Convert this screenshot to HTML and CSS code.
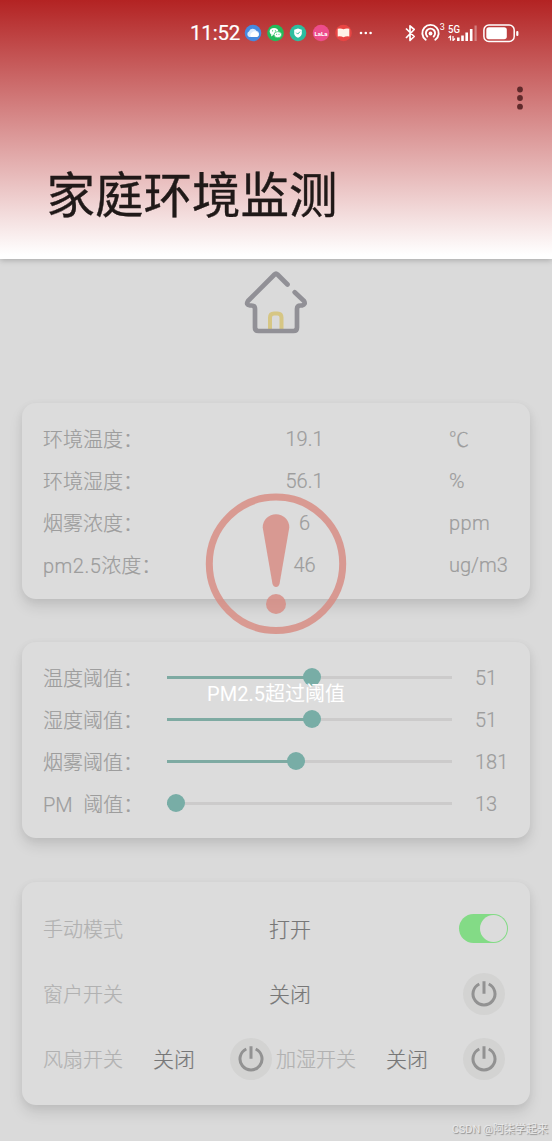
FILE: index.html
```html
<!DOCTYPE html>
<html lang="zh-CN">
<head>
<meta charset="utf-8">
<title>家庭环境监测</title>
<link rel="stylesheet" href="styles.css">
</head>
<body>
<svg class="defs" width="0" height="0" aria-hidden="true">
  <symbol id="power" viewBox="0 0 42 42">
    <circle cx="21" cy="21" r="21" fill="#d3d3d2"/>
    <path d="M16.300 11A11 11 0 1 0 25.700 11M21 8.200V20.700" fill="none" stroke="#929292" stroke-width="3"/>
  </symbol>
</svg>
<header class="header">
  <div class="status">
    <span class="clock">11:52</span>
    <svg class="apps" width="124" height="18" viewBox="0 0 124 18">
      <circle cx="9" cy="9" r="8.300" fill="#4689df"/>
      <path d="M5.200 13a3 3 0 0 1-.2-5.500 4 4 0 0 1 7.300-.8 3.200 3.200 0 0 1 .3 6.300z" fill="#d9eafd"/>
      <path d="M7 13a3 3 0 0 1 1-4.500 4 4 0 0 1 5.500 0 2.500 2.500 0 0 1-.5 4.500z" fill="#fff"/>
      <circle cx="31.500" cy="9" r="8.300" fill="#23bb5b"/>
      <ellipse cx="30" cy="7.600" rx="4.300" ry="3.500" fill="#fff"/><path d="M27.500 10l-.5 2.500 2.500-1.500z" fill="#fff"/>
      <ellipse cx="33.800" cy="10.700" rx="3.800" ry="3.100" fill="#fff" stroke="#23bb5b" stroke-width=".7"/>
      <g fill="#23bb5b"><circle cx="28.600" cy="6.800" r=".6"/><circle cx="31.400" cy="6.800" r=".6"/><circle cx="32.600" cy="10.200" r=".5"/><circle cx="35" cy="10.200" r=".5"/></g>
      <circle cx="54" cy="9" r="8.300" fill="#2dbd9f"/>
      <path d="M54 4.500l3.800 1.300v3.500c0 2-1.500 3.500-3.800 4.500-2.300-1-3.800-2.500-3.800-4.500V5.800z" fill="#fff"/>
      <path d="M52.300 8.700l1.400 1.400 2.300-2.500" fill="none" stroke="#2dbd9f"/>
      <circle cx="77" cy="9" r="8.300" fill="#ed4c8b"/>
      <text x="77" y="11.600" class="lala">LaLa</text>
      <circle cx="99.500" cy="9" r="8.300" fill="#e84543"/>
      <path d="M93.700 4.700q3.300-.8 5.800.6 2.500-1.400 5.800-.6v7.800q-3.300-.5-5.800.8-2.500-1.300-5.800-.8z" fill="#fff3e8"/>
      <g fill="#fff"><circle cx="117" cy="9" r="1.300"/><circle cx="121.800" cy="9" r="1.300"/></g>
    </svg>
    <svg class="more" width="6" height="18" viewBox="0 0 6 18"><circle cx="2.600" cy="9" r="1.300" fill="#fff"/></svg>
    <svg class="signals" width="118" height="24" viewBox="0 0 118 24">
      <path d="M3 7.500l8.200 8-4.200 4V4.800l4.200 3.700L3 17" fill="none" stroke="#fff" stroke-width="1.700" stroke-linejoin="round"/>
      <g fill="none" stroke="#fff" stroke-width="1.900" stroke-linecap="round">
        <path d="M22.700 18.700a8.200 8.200 0 1 1 9.600 0"/><path d="M24.300 15.500a4.600 4.600 0 1 1 6.400 0"/>
      </g>
      <circle cx="27.500" cy="12.500" r="1.900" fill="#fff"/>
      <text x="36.800" y="9" class="tiny">3</text>
      <text x="45" y="12" class="net" textLength="12" lengthAdjust="spacingAndGlyphs">5G</text>
      <path d="M47.500 14.500v5M45.500 16.800l2-2M50 15v5M52 17.500l-2 2" fill="none" stroke="#fff" stroke-width="1.200"/>
      <g fill="#fff"><rect x="54" y="16.500" width="2.600" height="3.500"/><rect x="58.200" y="14.500" width="2.600" height="5.500"/><rect x="62.400" y="11.500" width="2.600" height="8.500"/><rect x="66.900" y="8" width="2.600" height="12"/><rect x="71.500" y="4.500" width="2.200" height="15.500" opacity=".35"/></g>
      <rect x="80.900" y="4" width="30.300" height="16.500" rx="5" fill="none" stroke="#fff" stroke-width="1.500"/>
      <rect x="83.300" y="6.300" width="20.500" height="12" rx="2.700" fill="#fff"/>
      <rect x="113.200" y="10" width="2.200" height="5" rx="1" fill="#fff"/>
    </svg>
  </div>
  <svg class="menu" width="8" height="26" viewBox="0 0 8 26"><g fill="#602a2b"><circle cx="4" cy="4.500" r="2.900"/><circle cx="4" cy="13" r="2.900"/><circle cx="4" cy="21.700" r="2.900"/></g></svg>
  <h1 class="title">家庭环境监测</h1>
</header>
<main class="content">
  <svg class="house" width="64" height="64" viewBox="0 0 64 64">
    <path d="M26 60V46.500q0-4 4-4h3.500q4 0 4 4V60" fill="none" stroke="#d6c684" stroke-width="4"/>
    <path d="M43.500 13.500L33.500 3.500q-1.500-1.500-3 0L4 30q-2.500 3.800 2 4.500h1.500q3.500 0 3.500 3.500v18.500q0 3.500 3.500 3.500h35q3.500 0 3.500-3.500V38q0-3.500 3.500-3.500H58q4-1 2-4.500L50.700 21.300" fill="none" stroke="#919096" stroke-width="4.700" stroke-linecap="round" stroke-linejoin="round"/>
  </svg>
  <section class="card readings">
    <div class="reading"><span class="label">环境温度：</span><span class="value">19.1</span><span class="cjk">℃</span></div>
    <div class="reading"><span class="label">环境湿度：</span><span class="value">56.1</span><span class="percent">%</span></div>
    <div class="reading"><span class="label">烟雾浓度：</span><span class="value">6</span><span class="ppm">ppm</span></div>
    <div class="reading"><span class="label"><span class="spaced">pm2.5</span>浓度：</span><span class="value">46</span><span>ug/m3</span></div>
  </section>
  <section class="card limits">
    <div class="limit"><span class="label">温度阈值：</span><div class="slider"><div class="fill" style="width:145px"></div><div class="thumb"></div></div><span>51</span></div>
    <div class="limit"><span class="label">湿度阈值：</span><div class="slider"><div class="fill" style="width:145px"></div><div class="thumb"></div></div><span>51</span></div>
    <div class="limit"><span class="label">烟雾阈值：</span><div class="slider"><div class="fill" style="width:128.500px"></div><div class="thumb"></div></div><span>181</span></div>
    <div class="limit"><span class="label pm">PM  阈值：</span><div class="slider"><div class="fill" style="width:9px"></div><div class="thumb"></div></div><span>13</span></div>
  </section>
  <section class="card controls">
    <div class="control"><span class="name">手动模式</span><span class="state">打开</span><div class="toggle"><div class="knob"></div></div></div>
    <div class="control"><span class="name">窗户开关</span><span class="state">关闭</span><svg class="power"><use href="#power"/></svg></div>
    <div class="control pair"><span class="name">风扇开关</span><span class="state">关闭</span><svg class="power"><use href="#power"/></svg><span class="name">加湿开关</span><span class="state">关闭</span><svg class="power"><use href="#power"/></svg></div>
  </section>
</main>
<div class="alert">
  <svg width="142" height="142" viewBox="0 0 142 142">
    <g fill="#d88980" opacity=".8"><circle cx="71" cy="70.800" r="66.700" fill="none" stroke="#d88980" stroke-width="7"/>
    <path d="M57.700 34.500a13.300 13.300 0 0 1 26.600 0L74.500 91q-1 3-3.500 3t-3.500-3z"/>
    <circle cx="71" cy="111" r="10"/></g>
  </svg>
  <p class="message">PM2.5超过阈值</p>
</div>
<div class="credit">CSDN @阿柒学起来</div>
</body>
</html>
```
FILE: styles.css
```css
* { box-sizing: border-box; }
body {
  margin: 0;
  position: relative;
  width: 552px;
  height: 1141px;
  overflow: hidden;
  background: #dadada;
  font-family: Roboto, "Noto Sans CJK SC", sans-serif;
  font-size: 20px;
  font-weight: 300;
  color: #9d9d9d;
  -webkit-text-stroke: .2px currentColor;
}
.defs { position: absolute; }
.header {
  display: flex;
  flex-direction: column;
  height: 259px;
  background: linear-gradient(#b32323, #fff 255px);
  box-shadow: 0 1px 6px rgba(0, 0, 0, .25);
}
.status { display: flex; align-items: center; height: 65px; padding-left: 190px; }
.clock { width: 54px; font-size: 20.500px; font-weight: 400; color: #fff; letter-spacing: -.2px; }
.apps { flex: none; }
.more { flex: none; }
.signals { flex: none; margin-left: 29px; }
.lala { font: 700 6px Roboto, sans-serif; fill: #fff; text-anchor: middle; -webkit-text-stroke: 0; }
.tiny { font: 400 9px Roboto, sans-serif; fill: #fff; }
.net { font: 500 11px Roboto, sans-serif; fill: #fff; }
.menu { align-self: flex-end; margin: 20px 28px 0 0; }
.title {
  margin: 45px 0 0 46.500px;
  font-family: "Noto Sans CJK SC", sans-serif;
  font-size: 48.500px;
  line-height: 72px;
  font-weight: 400;
  color: #201918;
  -webkit-text-stroke: .4px #201918;
}
.content { display: flex; flex-direction: column; padding: 12px 22px 0; }
.house { align-self: center; margin-bottom: 68px; }
.card {
  padding: 0 21px;
  border-radius: 14px;
  background: #dcdcdc;
  box-shadow: 0 8px 14px rgba(0, 0, 0, .1), 0 2px 8px rgba(0, 0, 0, .05);
}
.readings { height: 196px; padding-top: 15px; margin-bottom: 43px; }
.reading { display: grid; grid-template-columns: 117px 289px 1fr; align-items: center; height: 42px; white-space: nowrap; }
.label { line-height: 28px; padding-top: 2px; }
.spaced { letter-spacing: .500px; }
.value { text-align: center; }
.cjk { font-family: "Noto Sans CJK SC", sans-serif; line-height: 28px; }
.ppm { letter-spacing: .400px; }
.percent { font-size: 21px; }
.limits { height: 196px; padding-top: 14px; margin-bottom: 44px; }
.limit { display: grid; grid-template-columns: 124px 285px 1fr; align-items: center; height: 42px; white-space: nowrap; }
.limit .label { padding-top: 4px; }
.limit > span:last-child { padding: 2px 0 0 23px; }
.pm { white-space: pre; word-spacing: .500px; }
.slider { display: flex; align-items: center; height: 18px; background: linear-gradient(#cccbcb, #cccbcb) center / 100% 3px no-repeat; }
.fill { height: 3px; background: #7eaaa2; }
.thumb { flex: none; width: 18px; height: 18px; margin-left: -9px; border-radius: 50%; background: #78ada6; }
.controls { height: 223px; padding-top: 14px; }
.control { display: grid; grid-template-columns: 226px 190px 1fr; align-items: center; height: 65px; }
.name { color: #b1b1b1; }
.state { font-size: 21px; color: #777; padding-bottom: 2px; }
.toggle { display: flex; justify-content: flex-end; width: 49px; height: 29px; padding: 1px; border-radius: 15px; background: #83db86; }
.knob { width: 27px; height: 27px; border-radius: 50%; background: #dcdcdc; }
.power { width: 42px; height: 42px; justify-self: center; }
.pair { grid-template-columns: 110px 77px 42px 1fr 77px 42px; padding-right: 4px; }
.pair .name:nth-child(4) { padding-left: 4px; }
.alert { position: absolute; left: 205px; top: 493px; width: 142px; }
.alert svg { display: block; }
.message { margin: 43.500px -20px 0; text-align: center; white-space: nowrap; line-height: 30px; font-weight: 400; color: #fff; -webkit-text-stroke: 0; }
.credit {
  position: absolute;
  right: 4px;
  bottom: 3px;
  font-size: 11px;
  line-height: 16px;
  font-weight: 400;
  color: #e9e9e9;
  text-shadow: 1px 1px 1px #888;
  -webkit-text-stroke: 0;
}
```
